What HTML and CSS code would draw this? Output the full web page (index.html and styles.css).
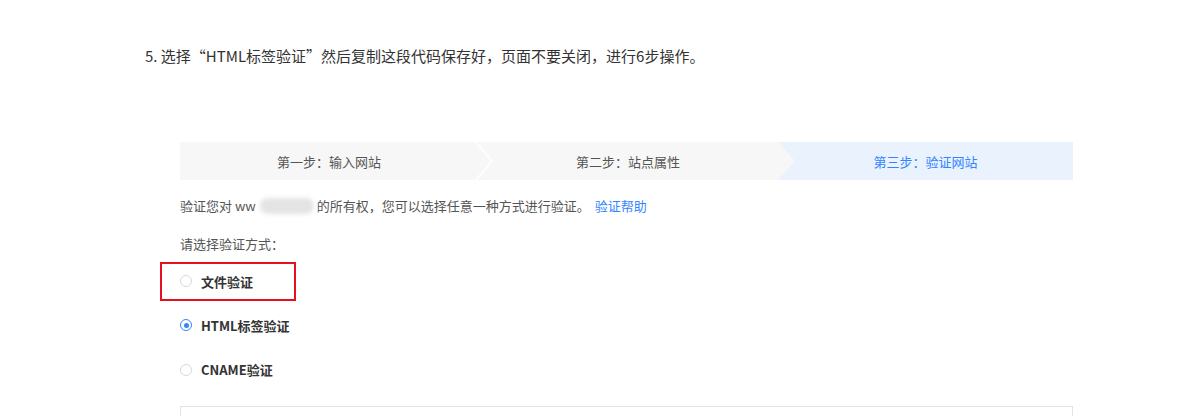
FILE: index.html
```html
<!DOCTYPE html>
<html lang="zh-CN">
<head>
<meta charset="utf-8">
<link rel="stylesheet" href="styles.css">
</head>
<body>
<div class="page">
  <p class="heading">5. 选择“HTML标签验证”然后复制这段代码保存好，页面不要关闭，进行6步操作。</p>
  <div class="panel">
    <div class="steps">
      <div class="step step1">第一步：输入网站
        <svg class="sep" width="20" height="38" viewBox="0 0 20 38"><polyline points="1,0 17,19 1,38" fill="none" stroke="#ffffff" stroke-width="2"/></svg>
      </div>
      <div class="step step2">第二步：站点属性</div>
      <div class="step step3">第三步：验证网站</div>
    </div>
    <p class="line1">验证您对 ww<span class="blur"></span>的所有权，您可以选择任意一种方式进行验证。<a class="help">验证帮助</a></p>
    <p class="line2">请选择验证方式：</p>
    <div class="options">
      <div class="opt"><span class="radio"></span><span class="label">文件验证</span><span class="mark"></span></div>
      <div class="opt"><span class="radio on"></span><span class="label">HTML标签验证</span></div>
      <div class="opt"><span class="radio"></span><span class="label">CNAME验证</span></div>
    </div>
    <div class="codebox"></div>
  </div>
</div>
</body>
</html>
```
FILE: styles.css
```css
html, body {
  margin: 0;
  padding: 0;
  background: #ffffff;
  overflow: hidden;
}
body {
  width: 1200px;
  height: 416px;
  font-family: "Microsoft YaHei", "Noto Sans CJK SC", "Liberation Sans", sans-serif;
  color: #333;
}
.page {
  padding: 46px 0 0 145px;
}
.heading {
  margin: 0;
  font-size: 15px;
  line-height: 20px;
  color: #333;
}
.panel {
  margin: 76px 0 0 35px;
  width: 893px;
}
.steps {
  display: flex;
  height: 38px;
  background: #f7f7f7;
  font-size: 13px;
}
.step {
  display: flex;
  align-items: center;
  justify-content: center;
  color: #555;
  position: relative;
}
.step1 {
  width: 298px;
  z-index: 3;
}
.sep {
  position: absolute;
  right: -17px;
  top: 0;
  opacity: 0.9;
}
.step2 {
  z-index: 2;
  background: #f7f7f7;
  clip-path: polygon(0 0, calc(100% - 17px) 0, 100% 50%, calc(100% - 17px) 100%, 0 100%);
  margin-right: -17px;
  padding-right: 17px;
  box-sizing: content-box;
  width: 300px;
}
.step3 {
  flex: 1;
  background: #eaf2fe;
  color: #3385ff;
  z-index: 1;
}
.line1, .line2 {
  margin: 0;
  font-size: 13px;
  line-height: 20px;
  color: #555;
}
.line1 {
  margin-top: 16px;
  display: flex;
  align-items: center;
  white-space: pre;
}
.blur {
  display: inline-block;
  width: 54px;
  height: 16px;
  margin: 0 3px 0 4px;
  background: #e4e4e4;
  border-radius: 8px;
  filter: blur(2px);
}
.help {
  color: #3385ff;
  margin-left: 5px;
}
.line2 {
  margin-top: 18px;
}
.options {
  margin-top: 5px;
}
.opt {
  position: relative;
  height: 44px;
  display: flex;
  align-items: center;
  gap: 9px;
}
.opt + .opt {
  height: 44.5px;
}
.radio {
  width: 10px;
  height: 10px;
  border: 1px solid #d8d8d8;
  border-radius: 50%;
  box-sizing: content-box;
  position: relative;
}
.radio.on {
  border-color: #3385ff;
}
.radio.on::after {
  content: "";
  position: absolute;
  left: 2.5px;
  top: 2.5px;
  width: 5px;
  height: 5px;
  border-radius: 50%;
  background: #3385ff;
}
.label {
  font-size: 13px;
  font-weight: bold;
  color: #333;
}
.mark {
  position: absolute;
  left: -20px;
  top: 3px;
  width: 132px;
  height: 35px;
  border: 2px solid #e60f1e;
}
.codebox {
  margin-top: 14px;
  height: 9px;
  border: 1px solid #e3e3e3;
}
```
